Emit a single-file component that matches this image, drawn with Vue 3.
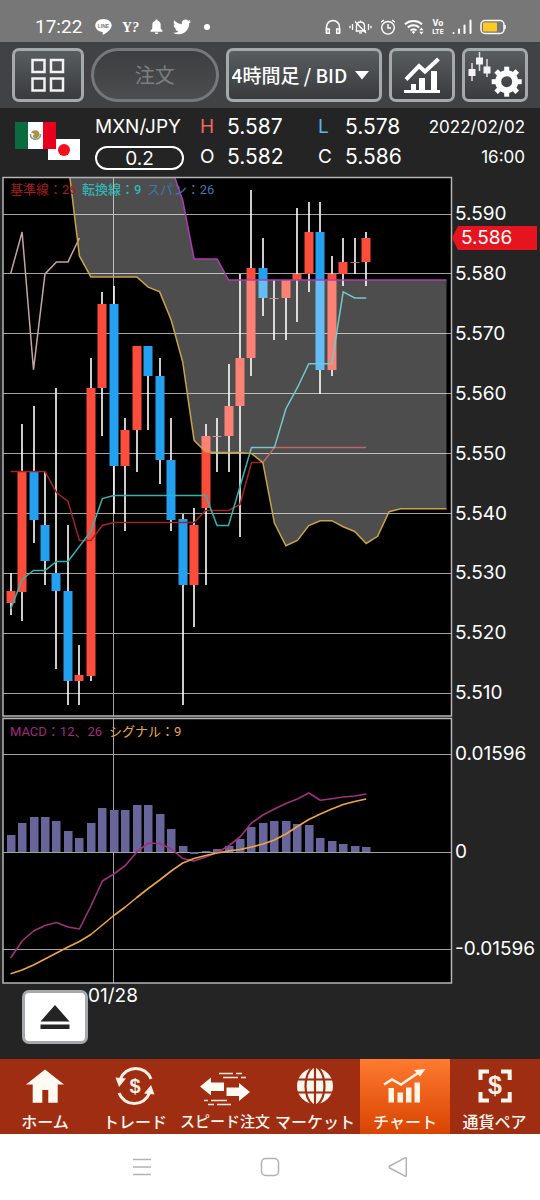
<script setup>
import { ref } from 'vue'

const timeframe = ref('4h-bid')

const STEP = 11.47
const xAt = (i) => 10.6 + STEP * i
// prices are given in thousandths above 5.000
const yAt = (p) => 214 + (590 - p) * 5.99
const round = (n) => Math.round(n * 10) / 10

// [open, close, high, low]
const candles = [
  [525, 527, 530, 523], [527, 547, 555, 522], [547, 539, 558, 535], [538, 532, 547, 528],
  [530, 527, 561, 514], [527, 512, 538, 508], [512, 513, 518, 508], [513, 561, 566, 512],
  [561, 575, 577, 553], [575, 548, 578, 540], [548, 554, 556, 537], [554, 568, 568, 547],
  [568, 563, 568, 554], [563, 549, 566, 545], [549, 539, 556, 537], [539, 528, 540, 508],
  [528, 538, 541, 521], [541, 553, 555, 528], [553, 553, 556, 547], [553, 558, 565, 547],
  [558, 566, 580, 536], [566, 581, 594, 563], [581, 576, 586, 573], [576, 576, 579, 569],
  [576, 579, 579, 569], [579, 580, 591, 572], [580, 587, 592, 577], [587, 564, 592, 560],
  [564, 580, 583, 563], [580, 582, 586, 578], [582, 582, 586, 580], [582, 586, 587, 578],
].map(([open, close, high, low], i) => {
  const top = yAt(Math.max(open, close))
  return {
    x: Math.round(xAt(i)),
    top: Math.round(top),
    height: Math.max(1, Math.round(yAt(Math.min(open, close)) - top)),
    high: Math.round(yAt(high)),
    low: Math.round(yAt(low)),
    kind: open === close ? 'flat' : close > open ? 'up' : 'down',
  }
})

const line = (values, first = 0, y = yAt) =>
  values.map((v, i) => `${round(xAt(i + first))},${round(y(v))}`).join(' ')
const repeat = (v, n) => Array(n).fill(v)
const raw = (v) => v

const baseLine = line([
  ...repeat(547, 4), 543.5, 542, 535.5, 535.5, 538, ...repeat(538.5, 8),
  540.5, 540.5, 540.5, 541.5, 548.5, 548.5, ...repeat(551, 9),
])
const turnLine = line([
  524, 529, 530.5, 530.5, 532, 532, 534.5, 537, 542.5, ...repeat(543, 9),
  538, 538, 544.5, 551, 551, 551, 557.5, 561, 565, 565, 565, 577, 576, 576,
])
const lagLine = line([580, 587, 564, 580, 582, 582, 586])
const spanB = line([
  598.7, 583, ...repeat(579.5, 5), 577.8, 577, 572.3, 565.3, 552.2, 550.3, 550.2, 550.2, 550.2,
  550, 548.5, 538.4, 534.6, 535.5, 538, 538.8, 538.8, 537.8, 537, 535, 536.2, 540.3, ...repeat(540.8, 5),
], 5)
const spanA = line([
  ...repeat(612, 8), 606, 597.8, 592.3, 582.5, 582.5, 582.5, ...repeat(579, 20),
], 5)
const cloud = `${spanB} ${spanA.split(' ').reverse().join(' ')}`

const prices = [590, 580, 570, 560, 550, 540, 530, 520, 510]

const ZERO = 852
const histogram = [
  17, 29, 35, 35, 31, 21, 14, 29, 44, 42, 42, 47, 47, 38, 23, 6, -2, 1, 3, 6,
  13, 25, 29, 31, 31, 28, 27, 14, 11, 8, 6, 5,
].map((h, i) => ({ x: Math.round(xAt(i)) - 4, y: h < 0 ? ZERO : ZERO - h, h: Math.abs(h) }))
const macdLine = line([
  958, 941, 931, 925.5, 922.5, 927, 929, 906, 881, 874, 865.5, 852, 843, 843.5, 849, 858.5,
  861, 857, 852.5, 846, 837, 823, 815, 809, 803.5, 799, 793, 800.3, 798.7, 797, 796, 794,
], 0, raw)
const signalLine = line([
  973.7, 970, 965, 959, 953, 947, 941.5, 934.5, 925, 915.5, 907, 897.5, 888.5, 880, 871, 863,
  858.5, 855.5, 853, 851, 849.5, 847, 844, 840, 834, 826.5, 819.5, 814, 809, 804.5, 801.5, 799,
], 0, raw)
const macdScale = [
  { y: 754, label: '0.01596' },
  { y: 852, label: '0' },
  { y: 949, label: '-0.01596' },
]

const teeth = [0, 45, 90, 135, 180, 225, 270, 315]

const tabs = [
  { id: 'home', label: 'ホーム' },
  { id: 'trade', label: 'トレード' },
  { id: 'speed', label: 'スピード注文' },
  { id: 'market', label: 'マーケット' },
  { id: 'chart', label: 'チャート' },
  { id: 'pair', label: '通貨ペア' },
]
</script>

<template>
  <div class="screen">
    <header class="status">
      <div class="status-group left">
        <time class="clock">17:22</time>
        <svg width="17" height="18" viewBox="0 0 17 18">
          <path fill="#fff" d="M8.500 1C3.900 1 .3 3.900.3 7.500c0 3.200 2.900 5.900 6.800 6.400.9.200.8.500.6 2.100 0 .4-.1.900.8.500 1.500-.7 8.200-4.800 8.200-9C16.700 3.900 13.100 1 8.500 1z" />
          <text x="8.500" y="9.500" text-anchor="middle" class="tiny-mark">LINE</text>
        </svg>
        <svg width="18" height="18" viewBox="0 0 18 18">
          <text x="0" y="14" class="serif-mark">Y</text>
          <text x="10" y="14" class="serif-mark slanted">?</text>
        </svg>
        <svg width="13" height="18" viewBox="0 0 13 18">
          <path fill="#fff" d="M6.500 1.500c.8 0 1.200.5 1.200 1.300 2.100.6 3 2.200 3 4.300v3.400l1.800 2.300v.9H.5v-.9l1.800-2.300V7.100c0-2.100.9-3.700 3-4.300 0-.8.4-1.300 1.200-1.300zM4.800 14.500h3.400c0 1-.7 1.600-1.700 1.600s-1.700-.6-1.700-1.600z" />
        </svg>
        <svg width="18" height="18" viewBox="0 0 24 24">
          <path fill="#fff" d="M23.953 4.570a10 10 0 01-2.825.775 4.958 4.958 0 002.163-2.723c-.951.555-2.005.959-3.127 1.184a4.920 4.920 0 00-8.384 4.482C7.690 8.095 4.067 6.130 1.640 3.162a4.822 4.822 0 00-.666 2.475c0 1.710.870 3.213 2.188 4.096a4.904 4.904 0 01-2.228-.616v.060a4.923 4.923 0 003.946 4.827 4.996 4.996 0 01-2.212.085 4.936 4.936 0 004.604 3.417 9.867 9.867 0 01-6.102 2.105c-.390 0-.779-.023-1.170-.067a13.995 13.995 0 007.557 2.209c9.053 0 13.998-7.496 13.998-13.985 0-.210 0-.420-.015-.630A9.935 9.935 0 0024 4.590z" />
        </svg>
        <svg width="12" height="18" viewBox="0 0 12 18"><circle cx="6" cy="9" r="3" fill="#fff" /></svg>
      </div>
      <div class="status-group right">
        <svg width="16" height="18" viewBox="0 0 16 18" fill="none" stroke="#fff" stroke-width="1.500">
          <path d="M1.500 15V9a6.500 6.500 0 0 1 13 0v6" />
          <path d="M1.500 11h2.800v4.300H1.500zM14.500 11h-2.800v4.300h2.800z" />
        </svg>
        <svg width="23" height="18" viewBox="0 0 23 18" fill="none" stroke="#fff" stroke-width="1.300">
          <path d="M6.500 13h10.500M7.500 12.500V8.300c0-2.600 1.600-4.300 4-4.300s4 1.700 4 4.300v4.200M11.500 4V2.500M10 14.800h3M6 3.500l11 11.500M3.500 6v6M1 7.800v2.500M19.500 6v6M22 7.800v2.500" />
        </svg>
        <svg width="16" height="18" viewBox="0 0 16 18" fill="none" stroke="#fff" stroke-width="1.400">
          <circle cx="8" cy="9.800" r="6.300" /><path d="M8 6v4h3M1 4.300 4 2M15 4.300 12 2" />
        </svg>
        <svg width="20" height="18" viewBox="0 0 20 18" fill="none" stroke="#fff" stroke-width="2">
          <path d="M1 6.200c4.700-4.300 12.300-4.300 17 0M3.800 9.500c3.100-2.900 8.300-2.900 11.400 0M6.500 12.500c1.700-1.500 4.300-1.500 6 0" />
          <path fill="#fff" stroke="none" d="m7.800 14 1.700-1.200 1.700 1.200-1.700 2zM17.300 9.500l2.200 2.700h-4.400zM17.300 16.500l2.200-2.700h-4.400z" />
        </svg>
        <svg width="12" height="18" viewBox="0 0 12 18">
          <text x="6" y="8" text-anchor="middle" class="volte">Vo</text>
          <text x="6" y="16" text-anchor="middle" class="volte lte">LTE</text>
        </svg>
        <svg width="20" height="18" viewBox="0 0 20 18" stroke="#fff" stroke-width="2" stroke-linecap="round">
          <path d="M1.500 15v0M7 11.500V15M12.500 7.500V15M18.500 2.500V15" />
        </svg>
        <svg width="26" height="18" viewBox="0 0 26 18">
          <rect x="1" y="2.500" width="23" height="13" rx="4" fill="none" stroke="#fff" stroke-width="1.500" />
          <rect x="3" y="4.500" width="14" height="9" rx="1" fill="#fcca22" />
          <path d="M25 7v4" stroke="#fff" stroke-width="1.500" />
        </svg>
      </div>
    </header>

    <div class="toolbar">
      <button class="tool grid-tool" aria-label="レイアウト">
        <svg width="36" height="36" viewBox="0 0 36 36" fill="none" stroke="#f2f2f2" stroke-width="2.500">
          <path d="M2.500 3h12v12h-12zM21 3h12v12H21zM2.500 21.500h12v12h-12zM21 21.500h12v12H21z" />
        </svg>
      </button>
      <button class="tool order-tool" disabled>注文</button>
      <div class="tool period-tool">
        <select v-model="timeframe" aria-label="足種">
          <option value="4h-bid">4時間足 / BID</option>
        </select>
        <svg class="caret" width="16" height="9" viewBox="0 0 16 9"><path fill="#fff" d="M1 0h14L8 8.500z" /></svg>
      </div>
      <button class="tool icon-tool" aria-label="テクニカル">
        <svg width="38" height="38" viewBox="0 0 38 38">
          <path d="M3 23.500 16 10l6 5.500L35.500 3" fill="none" stroke="#fff" stroke-width="4" />
          <path fill="#fff" d="M8 28h5v6H8zM16 22h6v12h-6zM28 15h6v19h-6zM1 34h36v3H1z" />
        </svg>
      </button>
      <button class="tool icon-tool" aria-label="チャート設定">
        <svg width="58" height="46" viewBox="0 0 58 46">
          <path stroke="#dcdfe0" stroke-width="1.500" d="M6 11v18M13.500 0v19M21 7v18" />
          <path fill="#f4f4f4" d="M2.500 17h7v7h-7zM10 5.500h7v7h-7zM17.500 14.500h7v7h-7z" />
          <g transform="translate(40.700 29.700)">
            <circle r="8.500" fill="none" stroke="#fff" stroke-width="6" />
            <rect v-for="a in teeth" :key="a" x="-2.500" y="-15" width="5" height="6" fill="#fff" :transform="`rotate(${a})`" />
          </g>
        </svg>
      </button>
    </div>

    <section class="quote">
      <svg class="flags" width="65" height="40" viewBox="0 0 65 40">
        <path fill="#fff" d="M33 17h32v21H33z" />
        <circle cx="49" cy="28" r="6" fill="#f5101c" />
        <path fill="#0b6b40" d="M0 0h14v27H0z" />
        <path fill="#fff" d="M13 0h15v27H13z" />
        <path fill="#e8001c" d="M28 0h13v27H28z" />
        <path d="M15.500 12c-.5 7 10.500 7 10 0" fill="none" stroke="#7fa07a" stroke-width="1.500" />
        <path fill="#b08f4b" d="M16 10.500c2-3.500 8.500-2.500 8.500 1.500 0 2.500-2 4.500-5 4.500l-2-2.500 2-2z" />
      </svg>
      <div class="pair">
        <strong>MXN/JPY</strong>
        <span class="spread">0.2</span>
      </div>
      <dl class="ohlc">
        <dt class="high">H</dt><dd>5.587</dd>
        <dt class="low">L</dt><dd>5.578</dd>
        <dt>O</dt><dd>5.582</dd>
        <dt>C</dt><dd>5.586</dd>
      </dl>
      <div class="when"><span>2022/02/02</span><span>16:00</span></div>
    </section>

    <svg class="chart" viewBox="0 172 540 814" role="img" aria-label="MXN/JPY チャート">
      <defs>
        <clipPath id="price-area"><rect x="3" y="178" width="448" height="538" /></clipPath>
      </defs>
      <rect x="3" y="177" width="449" height="539" fill="#000" />
      <rect x="3" y="718" width="449" height="265" fill="#000" />

      <g stroke="#a2a2a2" stroke-width="1">
        <path v-for="p in prices" :key="p" :d="`M3 ${Math.floor(yAt(p)) + 0.5}H451`" />
        <path v-for="s in macdScale" :key="s.y" :d="`M3 ${s.y + 0.5}H451`" />
        <path d="M113.500 178V716M113.500 719V983" />
      </g>

      <g clip-path="url(#price-area)">
        <g v-for="(c, i) in candles" :key="i">
          <path :d="`M${c.x} ${c.high}V${c.low}`" stroke="#fff" stroke-width="1.600" />
          <rect :x="c.x - 4.500" :y="c.top" width="9" :height="c.height" :class="c.kind" />
        </g>
        <g fill="none" stroke-width="1.500">
          <polyline :points="lagLine" stroke="#c9a3a0" />
          <polyline :points="baseLine" stroke="#a12422" />
          <polyline :points="turnLine" stroke="#35b3b3" />
        </g>
        <polygon :points="cloud" fill="#fff" fill-opacity=".3" />
        <g fill="none" stroke-width="1.500">
          <polyline :points="spanA" stroke="#b03cb4" />
          <polyline :points="spanB" stroke="#c9a346" />
        </g>
      </g>

      <g class="legend">
        <text x="10" y="194" fill="#a51f1c">基準線：26</text>
        <text x="82" y="194" fill="#35b3b3" class="strong">転換線：9</text>
        <text x="147" y="194" fill="#3a79b5">スパン：26</text>
        <text x="10" y="736" fill="#a22b7d">MACD：12、26</text>
        <text x="109" y="736" fill="#eba83f">シグナル：9</text>
      </g>

      <rect v-for="(b, i) in histogram" :key="i" :x="b.x" :y="b.y" width="8.500" :height="b.h" fill="#68659a" />
      <g fill="none" stroke-width="1.600" stroke-linejoin="round">
        <polyline :points="macdLine" stroke="#a0317c" />
        <polyline :points="signalLine" stroke="#eda544" />
      </g>

      <g fill="none" stroke="#b4b4b4" stroke-width="1.500">
        <rect x="3" y="177.500" width="448.500" height="538.500" />
        <rect x="3" y="718.500" width="448.500" height="264.500" />
      </g>

      <g class="scale">
        <text v-for="p in prices" :key="p" x="455" :y="Math.round(yAt(p)) + 6">5.{{ p }}</text>
        <text v-for="s in macdScale" :key="s.y" x="455" :y="s.y + 6">{{ s.label }}</text>
        <path fill="#e6141e" d="M452 238l6-12h79v24h-79z" />
        <text x="461" y="244" class="last">5.586</text>
      </g>
    </svg>

    <div class="time-axis">
      <button class="eject" aria-label="パネルを開く">
        <svg width="30" height="26" viewBox="0 0 30 26"><path fill="#242424" d="M15 1 29.500 17.500H.5zM.5 20.500h29v4.500H.5z" /></svg>
      </button>
      <span>01/28</span>
    </div>

    <nav class="tabs">
      <a v-for="t in tabs" :key="t.id" href="#" :class="['tab', t.id, { active: t.id === 'chart' }]">
        <svg v-if="t.id === 'home'" width="52" height="42" viewBox="0 0 52 42">
          <path fill="#fffaf2" d="M26 4.500 45 19.500h-6.300v18.200h-9.400V25h-6v12.700h-9.600V19.500H7z" />
        </svg>
        <svg v-else-if="t.id === 'trade'" width="52" height="42" viewBox="0 0 52 42">
          <path fill="none" stroke="#fff0e6" stroke-width="3" d="M11.500 14a16.300 16.300 0 0 1 30.500 0M40.500 28A16.300 16.300 0 0 1 10 28" />
          <path fill="#fff0e6" d="M6.500 12.500 17 13.500 10 22zM45.500 29.500 35 28.500 42 20z" />
          <text x="26" y="28" text-anchor="middle" class="dollar">$</text>
        </svg>
        <svg v-else-if="t.id === 'speed'" width="52" height="42" viewBox="0 0 52 42">
          <path fill="#fffaf2" d="M1 21.500 12 12.500v5h13v8.500H12v4.500zM51 27 40 36v-5H27.500v-8.500H40v-4.500z" />
          <path stroke="#ffe9dc" stroke-width="1.500" d="M20 8.500h14M37 8.500h6M24 12.500h15M42 12.500h5M5 35.500h4M12 35.500h16M9 39.500h6M18 39.500h14" />
        </svg>
        <svg v-else-if="t.id === 'market'" width="52" height="42" viewBox="0 0 52 42">
          <circle cx="26" cy="21" r="18" fill="#fff6ee" />
          <path fill="none" stroke="#9e2d12" stroke-width="2.200" d="M26 3v36M7 14.500h38M7 27.500h38M24 2C14 10 14 32 24 40M28 2c10 8 10 30 0 38" />
        </svg>
        <svg v-else-if="t.id === 'chart'" width="52" height="42" viewBox="0 0 52 42">
          <path fill="none" stroke="#fff6e8" stroke-width="2.500" d="m5 19.500 8-5 9 5L39 8" />
          <path fill="#fff6e8" d="M46.500 4 35 5l6 6.500zM9.500 23h5.500v14.500H9.500zM18.500 27.500h5.500v10h-5.500zM27 22.500h5.500v15H27zM35.500 17.500h5.500v20h-5.500z" />
        </svg>
        <svg v-else width="52" height="42" viewBox="0 0 52 42">
          <path fill="none" stroke="#fff6ee" stroke-width="4" d="M11.500 15V6.500H20M32 6.500h8.700V15M40.700 27v8.500H32M20 35.500h-8.500V27" />
          <text x="26" y="29" text-anchor="middle" class="dollar large">$</text>
        </svg>
        <span>{{ t.label }}</span>
      </a>
    </nav>

    <footer class="system">
      <button aria-label="最近"><svg width="20" height="20" viewBox="0 0 20 20"><path d="M1 2.500h18M1 10h18M1 17.500h18" /></svg></button>
      <button aria-label="ホーム"><svg width="20" height="20" viewBox="0 0 20 20"><rect x="1.500" y="1.500" width="17" height="17" rx="4" /></svg></button>
      <button aria-label="戻る"><svg width="20" height="20" viewBox="0 0 20 20"><path stroke-linejoin="round" d="M17 .8 1.800 9c-.8.500-.8 1.500 0 2L17 19.200c.7.300 1.300 0 1.300-.7v-17c0-.7-.6-1-1.300-.7z" /></svg></button>
    </footer>
  </div>
</template>

<style>
html,
body {
  background: #fff;
}
</style>

<style scoped>
.screen {
  background: #242424;
  color: #fff;
  font-family: Inter, "Noto Sans CJK JP", sans-serif;
}
.screen svg {
  display: block;
  flex: none;
}
button {
  margin: 0;
  padding: 0;
  border: 0;
  background: none;
  color: inherit;
  font: inherit;
}

.status {
  display: flex;
  justify-content: space-between;
  padding: 15px 34px 3px 35px;
  background: #777;
}
.status-group {
  display: flex;
  align-items: center;
  height: 24px;
}
.left {
  gap: 10px;
}
.right {
  gap: 8px;
}
.clock {
  margin-right: 3px;
  font: 19px/24px Roboto, sans-serif;
}
.tiny-mark {
  fill: #777;
  font: bold 5px "Liberation Sans", sans-serif;
}
.serif-mark {
  fill: #fff;
  font: bold 14px "Liberation Serif", serif;
}
.slanted {
  font-style: italic;
}
.volte {
  fill: #fff;
  font: bold 9px Roboto, sans-serif;
}
.lte {
  font-size: 7px;
}

.toolbar {
  display: flex;
  gap: 7px;
  padding: 6px 12px;
  background: #404244;
}
.tool {
  display: flex;
  align-items: center;
  justify-content: center;
  box-sizing: border-box;
  height: 54px;
  min-width: 0;
  border: 3px solid #a4a9ab;
  border-radius: 7px;
  background: linear-gradient(#595d60, #393b3d);
}
.grid-tool {
  flex: 66 1 0;
}
.order-tool {
  flex: 122 1 0;
  border-color: #76797b;
  border-radius: 27px;
  background: linear-gradient(#3c3e40, #4b4d4f);
  color: #7c7f81;
  font: 20px/30px "Noto Sans CJK JP", sans-serif;
}
.period-tool {
  position: relative;
  flex: 151 1 0;
}
.period-tool select {
  width: 100%;
  height: 100%;
  padding: 0 20px 0 3px;
  border: 0;
  background: transparent;
  color: #fff;
  font: 500 19px/28px "Noto Sans CJK JP", sans-serif;
  appearance: none;
}
.period-tool .caret {
  position: absolute;
  right: 9px;
  pointer-events: none;
}
.icon-tool {
  flex: 60 1 0;
}

.quote {
  display: flex;
  padding: 4px 15px 0;
  line-height: 30px;
}
.flags {
  margin: 10px 15px 0 0;
}
.pair {
  display: flex;
  flex-direction: column;
  width: 89px;
}
.pair strong {
  font-size: 19px;
  font-weight: 400;
}
.spread {
  box-sizing: border-box;
  height: 24px;
  margin-top: 4px;
  border: 2px solid #fff;
  border-radius: 12px;
  font-size: 19px;
  line-height: 21px;
  text-align: center;
}
.ohlc {
  display: grid;
  grid-template-columns: 27px 91px 27px 60px;
  grid-auto-rows: 30px;
  margin: 0 0 0 16px;
  font-size: 19px;
}
.ohlc dd {
  margin: 0;
  font-size: 21px;
}
.high {
  color: #ee6a62;
}
.low {
  color: #56b9e6;
}
.when {
  display: flex;
  flex: 1;
  flex-direction: column;
  align-items: flex-end;
  font-size: 17px;
  white-space: nowrap;
}

.chart {
  width: 100%;
}
.up {
  fill: #fc4c3b;
}
.down {
  fill: #24a0f0;
}
.flat {
  fill: #b06c66;
}
.legend {
  font: 13px Roboto, "Noto Sans CJK JP", sans-serif;
}
.legend .strong {
  font-weight: 500;
}
.scale {
  fill: #fff;
  font-size: 19px;
}

.time-axis {
  display: flex;
  align-items: flex-start;
  padding: 4px 22px 15px;
  font-size: 19px;
  line-height: 12px;
}
.eject {
  display: flex;
  align-items: center;
  justify-content: center;
  box-sizing: border-box;
  width: 66px;
  height: 54px;
  border: 3px solid #a4a9ab;
  border-radius: 7px;
  background: #fff;
}

.tabs {
  display: grid;
  grid-template-columns: repeat(6, 1fr);
  background: #9e2d12;
}
.tab {
  display: flex;
  flex-direction: column;
  align-items: center;
  gap: 2px;
  min-width: 0;
  padding: 6px 0 1px;
  color: #fff6ee;
  font: 500 16px/24px "Noto Sans CJK JP", sans-serif;
  text-decoration: none;
  white-space: nowrap;
}
.speed {
  font-size: 15px;
}
.active {
  background: linear-gradient(#ff7a30, #d84400);
}
.dollar {
  fill: #fff0e6;
  font: bold 20px "Liberation Sans", sans-serif;
}
.large {
  font-size: 25px;
}

.system {
  display: flex;
  justify-content: center;
  background: #fff;
}
.system button {
  display: flex;
  align-items: center;
  justify-content: center;
  width: 128px;
  height: 66px;
}
.system svg {
  fill: none;
  stroke: #b2b2b2;
  stroke-width: 1.5;
}
</style>
